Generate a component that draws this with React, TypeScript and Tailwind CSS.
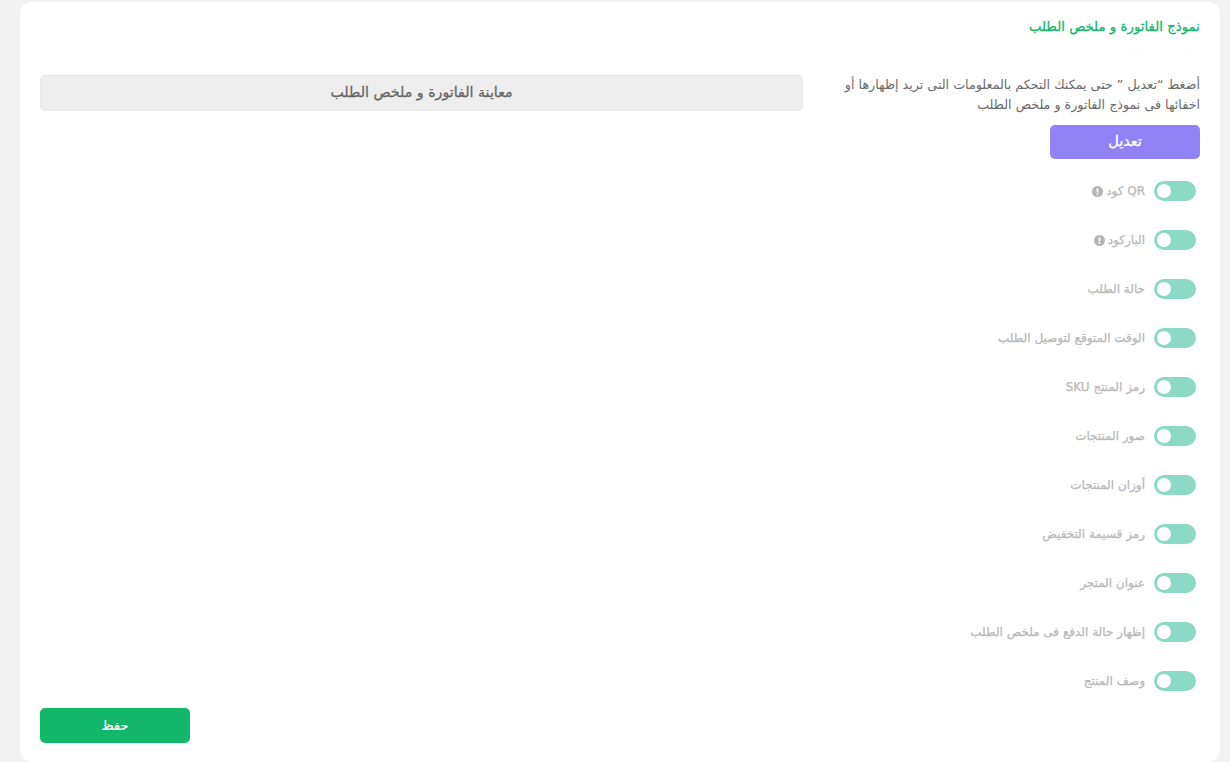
const rows: { label: string; info?: boolean }[] = [
  { label: "QR كود", info: true },
  { label: "الباركود", info: true },
  { label: "حالة الطلب" },
  { label: "الوقت المتوقع لتوصيل الطلب" },
  { label: "رمز المنتج SKU" },
  { label: "صور المنتجات" },
  { label: "أوزان المنتجات" },
  { label: "رمز قسيمة التخفيض" },
  { label: "عنوان المتجر" },
  { label: "إظهار حالة الدفع فى ملخص الطلب" },
  { label: "وصف المنتج" },
];

function Info() {
  return (
    <svg width="11" height="11" viewBox="0 0 12 12" className="shrink-0">
      <circle cx="6" cy="6" r="6" fill="#b5b5b5" />
      <rect x="5" y="2.4" width="2" height="4.6" rx="0.8" fill="#fff" />
      <circle cx="6" cy="8.8" r="1.1" fill="#fff" />
    </svg>
  );
}

export default function App() {
  return (
    <div
      dir="rtl"
      className="h-[762px] w-[1230px] overflow-hidden bg-[#f2f2f2] pt-[2px] pl-[20px] pr-[10px] font-['DejaVu_Sans','Noto_Sans',sans-serif]"
    >
      <div className="flex h-[760px] w-[1200px] flex-col rounded-[12px] bg-white">
        <div className="h-[52px] border-b border-[#fafafa] px-[20px] pt-[15px]">
          <h1 className="text-[13.3px] leading-[20px] text-[#12b76a] [-webkit-text-stroke:0.3px]">نموذج الفاتورة و ملخص الطلب</h1>
        </div>
        <div className="flex flex-1 gap-[17px] px-[20px] pt-[21px]">
          <div className="flex w-[380px] shrink-0 flex-col">
            <p className="text-[12.7px] leading-[20px] text-[#6b6b6b]">
              أضغط “تعديل ” حتى يمكنك التحكم بالمعلومات التى تريد إظهارها أو اخفائها فى نموذج الفاتورة و ملخص الطلب
            </p>
            <button className="mt-[10px] h-[34px] w-[150px] rounded-[5px] bg-[#9182f6] text-[14.5px] text-white [-webkit-text-stroke:0.3px]">
              تعديل
            </button>
            <div className="mt-[22px] flex flex-col gap-[29px] pr-[4px]">
              {rows.map((r) => (
                <div key={r.label} className="flex h-[20px] items-center gap-[9px]">
                  <div className="flex h-[20px] w-[42px] shrink-0 items-center justify-end rounded-full bg-[#8cdac5] px-[3px]">
                    <div className="h-[14px] w-[14px] rounded-full bg-white" />
                  </div>
                  <div className="flex items-center gap-[3px]">
                    <span className="text-[12px] leading-[20px] text-[#b8b8b8] [-webkit-text-stroke:0.25px]">{r.label}</span>
                    {r.info && <Info />}
                  </div>
                </div>
              ))}
            </div>
          </div>
          <div className="flex flex-1 flex-col justify-between pb-[19px]">
            <div className="flex h-[36px] items-center justify-center rounded-[5px] border border-[#e8e8e8] bg-[#eeeeee] text-[14.2px] text-[#666666] [-webkit-text-stroke:0.3px]">
              معاينة الفاتورة و ملخص الطلب
            </div>
            <button className="h-[35px] w-[150px] self-end rounded-[5px] bg-[#12b76a] text-[13px] text-white [-webkit-text-stroke:0.2px]">
              حفظ
            </button>
          </div>
        </div>
      </div>
    </div>
  );
}
